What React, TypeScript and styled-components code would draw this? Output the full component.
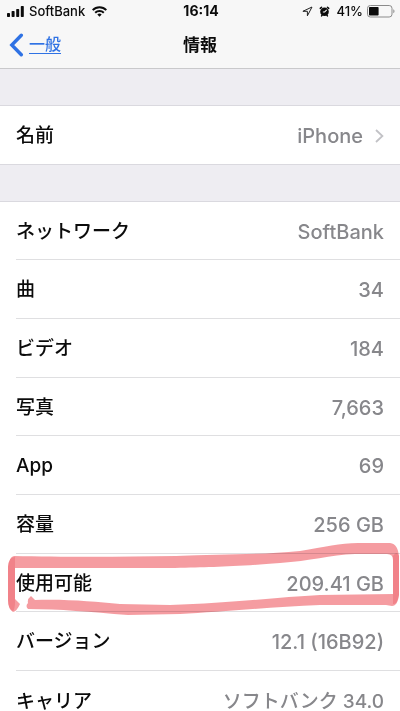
import React from "react";
import styled, { createGlobalStyle } from "styled-components";

const GlobalStyle = createGlobalStyle`
  *, *::before, *::after { box-sizing: border-box; }
  body {
    margin: 0;
    background: #eeedf2;
    color: #0b0b0b;
    font-family: Inter, "Noto Sans CJK JP", sans-serif;
  }
  dl, dt, dd, h1 { margin: 0; }
`;

const Screen = styled.div`
  display: flex;
  flex-direction: column;
  height: 100vh;
`;

const Header = styled.header`
  flex: none;
  background: #f7f7f7;
  border-bottom: 1px solid #c9c9cb;
`;

const ThreeColumns = styled.div`
  display: grid;
  grid-template-columns: 1fr auto 1fr;
  align-items: center;
`;

const StatusBar = styled(ThreeColumns)`
  height: 22px;
  padding: 0 5px 0 7px;
  font-size: 13px;
  font-weight: 500;
  line-height: 22px;
`;

const StatusGroup = styled.div<{ $end?: boolean }>`
  display: flex;
  align-items: center;
  justify-content: ${(p) => (p.$end ? "flex-end" : "flex-start")};
  gap: ${(p) => (p.$end ? "4px" : "5px")};
`;

const Carrier = styled.span`
  margin-right: 2px;
`;

const StatusIcons = styled.span`
  display: flex;
  align-items: center;
  gap: 6px;
  margin-right: 2px;
`;

const Clock = styled.time`
  font-size: 14px;
  font-weight: 700;
`;

const NavBar = styled(ThreeColumns)`
  height: 46px;
  padding: 0 8px;
`;

const BackLink = styled.a`
  display: flex;
  align-items: center;
  justify-self: start;
  gap: 5px;
  color: #2f72e4;
  font-size: 16px;
  font-weight: 500;
  line-height: 24px;
  text-decoration: none;
  span { border-bottom: 1px solid currentColor; line-height: 17px; }
`;

const Title = styled.h1`
  font-size: 17px;
  font-weight: 700;
  line-height: 24px;
`;

const Content = styled.main`
  flex: 1;
  min-height: 0;
  overflow-y: auto;
  scrollbar-width: none;
  padding-top: 36px;
`;

const Section = styled.section`
  margin-bottom: 36px;
  background: #fff;
  border-top: 1px solid #dad9df;
  border-bottom: 1px solid #dad9df;
`;

const NameButton = styled.button`
  display: flex;
  align-items: center;
  width: 100%;
  height: 58px;
  padding: 2px 16px 0;
  border: 0;
  background: none;
  color: inherit;
  font: inherit;
  font-size: 19px;
  font-weight: 500;
  line-height: 28px;
  text-align: left;
`;

const ButtonValue = styled.span`
  margin-left: auto;
  margin-right: 12px;
  color: #87878b;
  font-size: 20px;
`;

const Row = styled.div`
  position: relative;
  display: flex;
  align-items: center;
  justify-content: space-between;
  height: 59px;
  margin-left: 16px;
  padding: 2px 16px 0 0;
  border-bottom: 1px solid #dfdfe1;
  font-size: 19px;
  font-weight: 500;
  line-height: 28px;
  &:nth-child(3n + 1) { height: 58px; }
  &:last-child { border-bottom: 0; }
`;

const Value = styled.dd<{ $kana?: boolean }>`
  color: #87878b;
  font-size: ${(p) => (p.$kana ? "19px" : "20px")};
`;

const Marker = styled.svg`
  position: absolute;
  z-index: 1;
  top: -14px;
  left: -16px;
  width: calc(100% + 16px);
  height: 80px;
  pointer-events: none;
  mix-blend-mode: multiply;
`;

const rows = [
  { label: "ネットワーク", value: "SoftBank" },
  { label: "曲", value: "34" },
  { label: "ビデオ", value: "184" },
  { label: "写真", value: "7,663" },
  { label: "App", value: "69" },
  { label: "容量", value: "256 GB" },
  { label: "使用可能", value: "209.41 GB", marked: true },
  { label: "バージョン", value: "12.1 (16B92)" },
  { label: "キャリア", value: "ソフトバンク 34.0", kana: true },
];

const SignalIcon = () => (
  <svg width="17" height="11" viewBox="0 0 17 11" fill="#0b0b0b" aria-hidden="true">
    <rect x="0" y="7" width="3" height="4" rx=".7" />
    <rect x="4.6" y="5" width="3" height="6" rx=".7" />
    <rect x="9.2" y="3" width="3" height="8" rx=".7" />
    <rect x="13.8" y="0" width="3" height="11" rx=".7" />
  </svg>
);

const WifiIcon = () => (
  <svg width="15" height="11" viewBox="0 0 15 11" fill="none" stroke="#0b0b0b" strokeWidth="2" aria-hidden="true">
    <path d="M.7 4.1a9.6 9.6 0 0 1 13.6 0" />
    <path d="M3.2 6.8a6.1 6.1 0 0 1 8.6 0" />
    <path d="M7.5 10.8 5.3 8.5a3.2 3.2 0 0 1 4.4 0z" fill="#0b0b0b" stroke="none" />
  </svg>
);

const LocationIcon = () => (
  <svg width="11" height="11" viewBox="0 0 11 11" fill="none" stroke="#222" strokeWidth="1" strokeLinejoin="round" aria-hidden="true">
    <path d="M10 1 .9 5.3h4.5v4.5z" />
  </svg>
);

const AlarmIcon = () => (
  <svg width="11" height="11" viewBox="0 0 12 12" fill="none" aria-hidden="true">
    <path d="M1.4 2.6 2.8 1.3M10.6 2.6 9.2 1.3M2.8 10.8l1-1.4M9.2 10.8l-1-1.4" stroke="#0b0b0b" strokeWidth="1.6" strokeLinecap="round" />
    <circle cx="6" cy="6.2" r="4.7" fill="#0b0b0b" />
    <path d="M6 6.6 8.4 4.2M6 6.6H4.2" stroke="#f7f7f7" strokeWidth="1.2" />
  </svg>
);

const BatteryIcon = () => (
  <svg width="28" height="13" viewBox="0 0 28 13" aria-hidden="true">
    <rect x=".5" y=".5" width="24.5" height="11.5" rx="2.8" fill="none" stroke="#8b8b8b" />
    <rect x="2" y="2" width="9.6" height="8.5" rx=".8" fill="#0b0b0b" />
    <path d="M26.3 4.2c1.6.7 1.6 3.4 0 4.1z" fill="#8b8b8b" />
  </svg>
);

const BackIcon = () => (
  <svg width="16" height="24" viewBox="0 0 16 24" fill="none" stroke="#2f72e4" strokeWidth="3.4" strokeLinecap="round" strokeLinejoin="miter" aria-hidden="true">
    <path d="M13.3 2.2 3.8 12l9.5 9.8" />
  </svg>
);

const ChevronIcon = () => (
  <svg width="9" height="14" viewBox="0 0 9 14" fill="none" stroke="#c2c2c6" strokeWidth="1.8" aria-hidden="true">
    <path d="m1 1 6.4 6L1 13" />
  </svg>
);

const MarkerStroke = () => (
  <Marker viewBox="0 0 400 80" preserveAspectRatio="none" fill="#ee5a63" fillOpacity=".6" aria-hidden="true">
    <path d="M14 16C60 17 120 17 176 16C220 14 260 15 300 11C325 7 340 3 358 3L390 3C396 4 398 8 399 16L399 55C398 62 396 66 392 66L386 65L320 65C270 67 220 72 180 74L128 75C90 72 60 69 28 69Q25 66 28 63Q27 59 31 56L35 60C70 59 95 62 120 64L170 65C230 63 280 57 320 55L393 54L393 20Q393 14 387 14L355 14C330 15 310 21 280 23C230 27 210 27 175 28L15 28L15 59L20 64Q17 71 13 72Q8 69 8 60L8 27Q9 17 14 16Z" />
    <path d="M8 26Q9 17 15 17L15 62Q15 69 13 71Q8 69 8 60ZM393 16Q397 10 399 16L399 55Q397 65 393 64Z" fill="#e9515b" fillOpacity=".35" />
  </Marker>
);

export default function App() {
  return (
    <Screen>
      <GlobalStyle />
      <Header>
        <StatusBar>
          <StatusGroup>
            <SignalIcon />
            <Carrier>SoftBank</Carrier>
            <WifiIcon />
          </StatusGroup>
          <Clock>16:14</Clock>
          <StatusGroup $end>
            <StatusIcons>
              <LocationIcon />
              <AlarmIcon />
            </StatusIcons>
            <span>41%</span>
            <BatteryIcon />
          </StatusGroup>
        </StatusBar>
        <NavBar>
          <BackLink href="#general">
            <BackIcon />
            <span>一般</span>
          </BackLink>
          <Title>情報</Title>
        </NavBar>
      </Header>
      <Content>
        <Section>
          <NameButton type="button">
            <span>名前</span>
            <ButtonValue>iPhone</ButtonValue>
            <ChevronIcon />
          </NameButton>
        </Section>
        <Section>
          <dl>
            {rows.map((row) => (
              <Row key={row.label}>
                <dt>{row.label}</dt>
                <Value $kana={row.kana}>{row.value}</Value>
                {row.marked && <MarkerStroke />}
              </Row>
            ))}
          </dl>
        </Section>
      </Content>
    </Screen>
  );
}
